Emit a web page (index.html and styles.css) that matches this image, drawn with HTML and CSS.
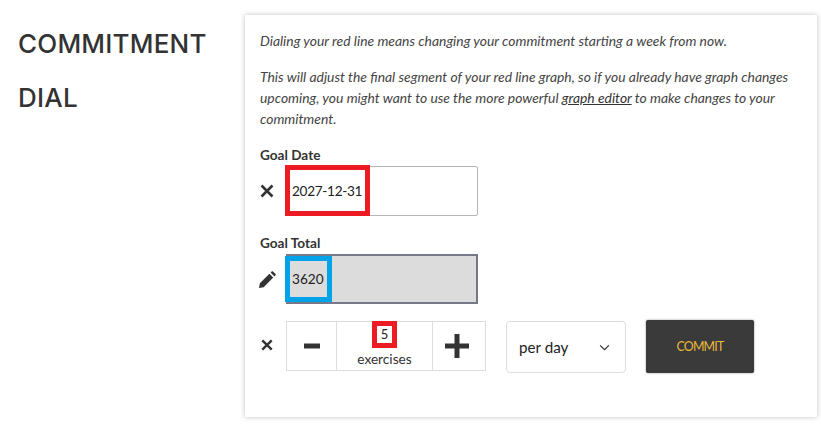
FILE: index.html
```html
<!DOCTYPE html>
<html lang="en">
<head>
<meta charset="utf-8">
<title>Commitment Dial</title>
<link rel="stylesheet" href="styles.css">
</head>
<body>
<main class="page">
  <h2 class="title">COMMITMENT DIAL</h2>
  <section class="card">
    <p class="note">Dialing your red line means changing your commitment starting a week from now.</p>
    <p class="note">This will adjust the final segment of your red line graph, so if you already have graph changes upcoming, you might want to use the more powerful <a href="#">graph editor</a> to make changes to your commitment.</p>

    <div class="label">Goal Date</div>
    <div class="field-row">
      <svg class="icon" viewBox="0 0 14 14"><path d="M1.5 1.5l11 11M12.5 1.5l-11 11" fill="none" stroke="#333" stroke-width="2.6"/></svg>
      <div class="input"><span class="mark mark-red">2027-12-31</span></div>
    </div>

    <div class="label label-total">Goal Total</div>
    <div class="field-row">
      <svg class="icon icon-pencil" viewBox="0 0 16 16"><path d="M0 16l.8-4.4L9.8 2.6l3.6 3.6-9 9zM10.9 1.5l.8-.9c.5-.5 1.2-.5 1.7 0l2 2c.5.5.5 1.2 0 1.7l-.9.8z" fill="#333"/></svg>
      <div class="input input-locked"><span class="mark mark-blue">3620</span></div>
    </div>

    <div class="dial-row">
      <svg class="icon icon-small" viewBox="0 0 14 14"><path d="M1.5 1.5l11 11M12.5 1.5l-11 11" fill="none" stroke="#333" stroke-width="2.8"/></svg>
      <div class="stepper">
        <div class="step"><svg viewBox="0 0 18 18"><rect x="1" y="6.5" width="16" height="5" fill="#333"/></svg></div>
        <div class="amount"><span class="amount-value">5</span><span class="amount-unit">exercises</span></div>
        <div class="step step-plus"><svg viewBox="0 0 26 26"><path d="M1 10.5h24v5H1zM10.5 1h5v24h-5z" fill="#333"/></svg></div>
      </div>
      <div class="select">
        <span>per day</span>
        <svg viewBox="0 0 12 8"><path d="M1 1.5l5 5 5-5" fill="none" stroke="#333" stroke-width="1.4"/></svg>
      </div>
      <button class="commit" type="button">COMMIT</button>
    </div>
  </section>
</main>
</body>
</html>
```

FILE: styles.css
```css
* { box-sizing: border-box; }
html, body { margin: 0; background: #fff; }
body { width: 821px; height: 424px; overflow: hidden; font-family: "Lato", "Open Sans", sans-serif; color: #333; }
.page { display: flex; align-items: flex-start; padding: 15px 4px 0 18px; }
.title {
  width: 227px; margin: 0; padding-top: 2px;
  font-family: "Inter", "Open Sans", sans-serif; font-weight: 500; font-size: 26px; line-height: 54px; color: #333; letter-spacing: 0.2px;
}
.card { width: 572px; height: 402px; padding: 15px 15px 0; background: #fff; box-shadow: 0 0 5px rgba(0,0,0,.25); }
.note { margin: 0 0 15px; font-style: italic; font-size: 13.9px; line-height: 21px; color: #444; }
.note a { color: #333; text-decoration: underline; }
.label { margin-top: 17px; font-weight: 700; font-size: 13.6px; line-height: 18px; color: #333; }
.label-total { margin-top: 18px; }
.field-row { display: flex; align-items: center; margin-top: 2px; }
.icon { width: 14px; height: 14px; flex: none; margin-right: 12px; }
.icon-pencil { width: 17px; height: 17px; margin: 0 10px 0 -1px; }
.input { position: relative; width: 192px; height: 50px; border: 1px solid #b5b5b5; border-radius: 2px; background: #fff; display: flex; }
.input-locked { align-items: center; background: #dcdcdc; border: 2px solid #77778a; border-radius: 0; height: 50px; }
.mark { display: flex; align-items: center; flex: none; white-space: nowrap; padding: 0 2px; font-size: 13.6px; letter-spacing: -0.3px; color: #222; }
.mark-red { width: 85px; height: 51px; margin: -2px 0 0 -2px; border: 5px solid #ed1c24; }
.mark-blue { width: 47px; height: 46px; margin: 0 0 0 -3px; border: 5px solid #00a2e8; letter-spacing: 0; }
.dial-row { display: flex; align-items: flex-start; margin-top: 17px; }
.dial-row .icon-small { width: 12px; height: 12px; margin: 18px 13px 0 1px; }
.stepper { display: flex; width: 200px; height: 50px; border: 1px solid #ddd; }
.step { width: 49px; display: flex; align-items: center; justify-content: center; }
.step svg { width: 18px; height: 18px; }
.step-plus { width: 52px; padding-right: 5px; }
.step-plus svg { width: 26px; height: 26px; flex: none; }
.amount { flex: 1; display: flex; flex-direction: column; align-items: center; border: solid #ddd; border-width: 0 1px; }
.amount-value { width: 25px; height: 27px; margin-top: -1px; border: 5px solid #ed1c24; font-size: 13px; line-height: 17px; text-align: center; color: #222; }
.amount-unit { font-size: 13.7px; line-height: 20px; margin-top: 1px; color: #333; }
.select { display: flex; align-items: center; justify-content: space-between; width: 120px; height: 52px; margin-left: 20px; padding: 0 15px 0 12px; border: 1px solid #ddd; border-radius: 4px; font-size: 15.2px; color: #222; }
.select svg { width: 11px; height: 7px; }
.commit { width: 108px; height: 53px; margin: -1px 0 0 20px; border: 0; border-radius: 2px; background: #3a3a3a; color: #eab93a; font-family: inherit; font-size: 12.4px; letter-spacing: -0.8px; box-shadow: 0 0 2px rgba(0,0,0,.5); }
```
